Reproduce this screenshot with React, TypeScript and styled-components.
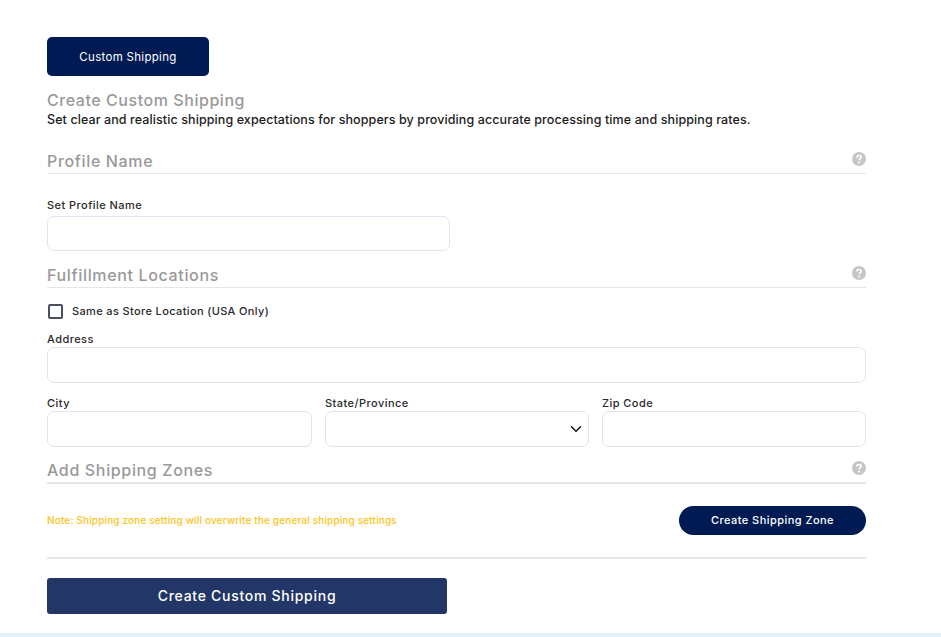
import styled, { createGlobalStyle } from 'styled-components'
import { LuChevronDown } from 'react-icons/lu'

const GlobalStyle = createGlobalStyle`
  html, body {
    margin: 0;
    padding: 0;
    background: #ffffff;
    overflow: hidden;
  }
  * {
    box-sizing: border-box;
  }
`

const Page = styled.div`
  height: 637px;
  display: flex;
  flex-direction: column;
  font-family: Inter, "Open Sans", "Liberation Sans", sans-serif;
`

const Content = styled.div`
  flex: 1;
  width: 866px;
  padding: 37px 0 0 47px;
  display: flex;
  flex-direction: column;
  align-items: flex-start;
`

const BottomBand = styled.div`
  height: 4px;
  background: #e3f1fa;
`

const TabButton = styled.button`
  width: 162px;
  height: 39px;
  border: 0;
  border-radius: 5px;
  background: #001b54;
  color: #ffffff;
  font-family: inherit;
  font-size: 11.5px;
  letter-spacing: 0.3px;
`

const Title = styled.h1`
  margin: 14px 0 0;
  height: 19px;
  line-height: 21px;
  font-size: 16px;
  font-weight: 500;
  letter-spacing: 0.55px;
  color: #999999;
`

const Subtitle = styled.p`
  margin: 2px 0 0;
  height: 17px;
  line-height: 17px;
  font-size: 12.5px;
  font-weight: 500;
  letter-spacing: 0.095px;
  color: #1c1c1c;
`

const SectionHead = styled.div<{ $top: number; $thick?: boolean }>`
  width: 100%;
  margin-top: ${(p) => p.$top}px;
  height: ${(p) => (p.$thick ? 26 : 25)}px;
  display: flex;
  align-items: flex-start;
  justify-content: space-between;
  border-bottom: ${(p) => (p.$thick ? 2 : 1)}px solid #e6e6e6;
`

const SectionTitle = styled.h2`
  margin: 0;
  line-height: 25px;
  font-size: 16px;
  font-weight: 500;
  letter-spacing: 0.65px;
  color: #999999;
`

const HelpIcon = styled.svg`
  width: 14px;
  height: 14px;
  margin-top: 3px;
  margin-right: 0;
`

const Label = styled.label<{ $top?: number }>`
  display: block;
  margin-top: ${(p) => p.$top ?? 0}px;
  height: 14px;
  line-height: 14px;
  font-size: 11px;
  font-weight: 500;
  letter-spacing: 0.45px;
  color: #2a2a2a;
`

const TextInput = styled.input<{ $width?: number; $height?: number; $top?: number }>`
  display: block;
  width: ${(p) => (p.$width ? `${p.$width}px` : '100%')};
  height: ${(p) => p.$height ?? 36}px;
  margin-top: ${(p) => p.$top ?? 0}px;
  border: 1px solid #dfe4f0;
  border-radius: 7px;
  background: #ffffff;
  outline: none;
`

const CheckRow = styled.div`
  margin-top: 16px;
  margin-left: 1px;
  height: 15px;
  display: flex;
  align-items: center;
  gap: 9px;
`

const CheckBox = styled.span`
  width: 15px;
  height: 15px;
  border: 2px solid #4a5160;
  border-radius: 2px;
`

const CheckLabel = styled.span`
  line-height: 13px;
  font-size: 11px;
  font-weight: 500;
  letter-spacing: 0.37px;
  color: #2a2a2a;
`

const AddressBlock = styled.div`
  width: 100%;
  margin-top: 13px;
`

const FieldGrid = styled.div`
  width: 100%;
  margin-top: 13px;
  display: grid;
  grid-template-columns: 265px 264px 264px;
  column-gap: 13px;
`

const Field = styled.div`
  min-width: 0;
`

const SelectBox = styled.div`
  height: 36px;
  margin-top: 1px;
  border: 1px solid #dfe4f0;
  border-radius: 7px;
  display: flex;
  align-items: center;
  justify-content: flex-end;
  padding-right: 3px;
  color: #111111;
  font-size: 18px;
`

const ZoneRow = styled.div`
  width: 100%;
  margin-top: 21px;
  height: 31px;
  display: flex;
  align-items: center;
  justify-content: space-between;
`

const Note = styled.span`
  font-size: 10px;
  font-weight: 500;
  line-height: 12px;
  margin-top: -1px;
  letter-spacing: 0.15px;
  color: #fcc419;
`

const ZoneButton = styled.button`
  width: 187px;
  height: 29px;
  border: 0;
  border-radius: 15px;
  background: #001b54;
  color: #ffffff;
  font-family: inherit;
  font-size: 11px;
  font-weight: 500;
  letter-spacing: 0.45px;
  line-height: 13px;
  padding: 0 0 1px;
`

const Divider = styled.hr`
  width: 100%;
  height: 2px;
  margin: 21px 0 0;
  border: 0;
  background: #e6e6e6;
`

const SubmitButton = styled.button`
  width: 400px;
  height: 36px;
  margin-top: 19px;
  padding: 0 0 2px;
  border: 0;
  border-radius: 3px;
  background: #223767;
  color: #ffffff;
  font-family: inherit;
  font-size: 14px;
  font-weight: 500;
  letter-spacing: 0.72px;
`

function Help() {
  return (
    <HelpIcon viewBox="0 0 14 14">
      <circle cx="7" cy="7" r="7" fill="#c6c6c6" />
      <path
        d="M4.9 5.4c0-1.2 1-1.9 2.2-1.9s2.1.7 2.1 1.8c0 1.7-2.1 1.6-2.1 3"
        fill="none"
        stroke="#ffffff"
        strokeWidth="1.6"
      />
      <circle cx="7.1" cy="10.5" r="1" fill="#ffffff" />
    </HelpIcon>
  )
}

export default function App() {
  return (
    <Page>
      <GlobalStyle />
      <Content>
        <TabButton>Custom Shipping</TabButton>
        <Title>Create Custom Shipping</Title>
        <Subtitle>
          Set clear and realistic shipping expectations for shoppers by providing accurate processing time and shipping rates.
        </Subtitle>

        <SectionHead $top={21}>
          <SectionTitle>Profile Name</SectionTitle>
          <Help />
        </SectionHead>
        <Label $top={24}>Set Profile Name</Label>
        <TextInput $width={403} $height={35} $top={4} />

        <SectionHead $top={12}>
          <SectionTitle>Fulfillment Locations</SectionTitle>
          <Help />
        </SectionHead>
        <CheckRow>
          <CheckBox />
          <CheckLabel>Same as Store Location (USA Only)</CheckLabel>
        </CheckRow>

        <AddressBlock>
          <Label>Address</Label>
          <TextInput $top={1} />
        </AddressBlock>

        <FieldGrid>
          <Field>
            <Label>City</Label>
            <TextInput $top={1} />
          </Field>
          <Field>
            <Label>State/Province</Label>
            <SelectBox>
              <LuChevronDown />
            </SelectBox>
          </Field>
          <Field>
            <Label>Zip Code</Label>
            <TextInput $top={1} />
          </Field>
        </FieldGrid>

        <SectionHead $top={11} $thick>
          <SectionTitle>Add Shipping Zones</SectionTitle>
          <Help />
        </SectionHead>
        <ZoneRow>
          <Note>Note: Shipping zone setting will overwrite the general shipping settings</Note>
          <ZoneButton>Create Shipping Zone</ZoneButton>
        </ZoneRow>
        <Divider />
        <SubmitButton>Create Custom Shipping</SubmitButton>
      </Content>
      <BottomBand />
    </Page>
  )
}
